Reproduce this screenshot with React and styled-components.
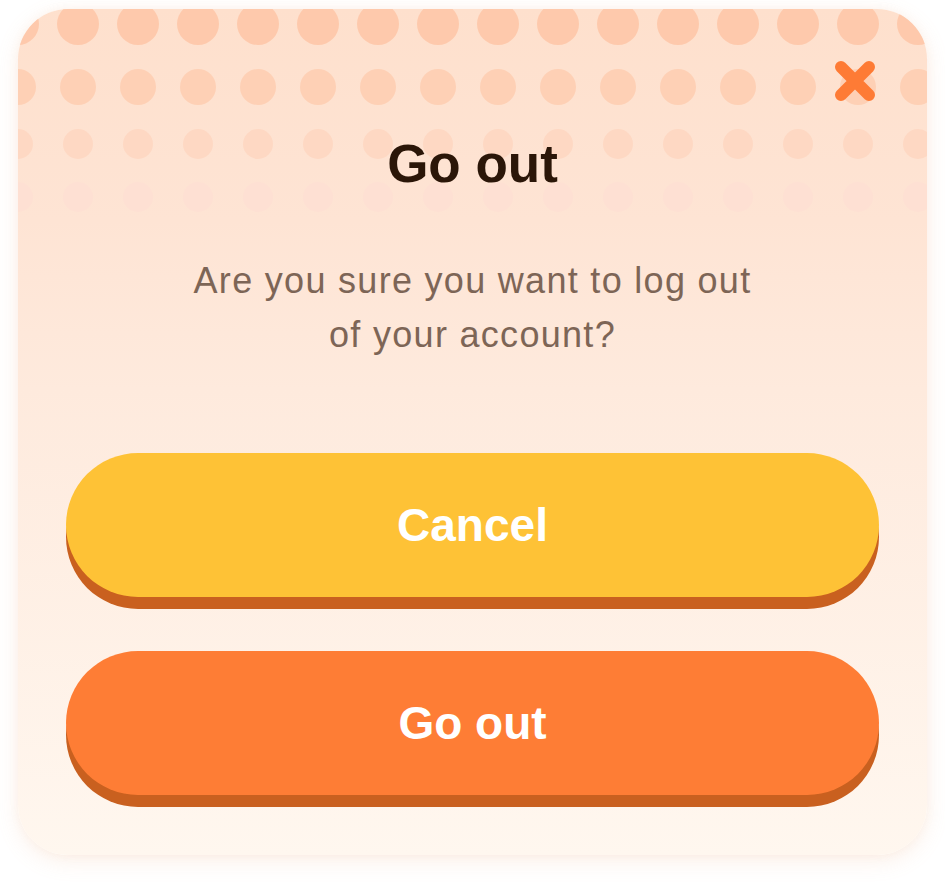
import styled, { createGlobalStyle } from "styled-components";

const GlobalStyle = createGlobalStyle`
  html, body {
    margin: 0;
    padding: 0;
    background: #ffffff;
  }
  body {
    font-family: "Liberation Sans", Arial, sans-serif;
  }
`;

const dotRows = [
  { y: 15, r: 21, fill: "#fec9ac" },
  { y: 78, r: 18, fill: "#fed0b5" },
  { y: 135, r: 15, fill: "#fed8c3" },
  { y: 188, r: 15, fill: "#fee0d3" },
];

function Dots() {
  const cols = Array.from({ length: 17 }, (_, i) => i * 60);
  return (
    <DotLayer width="909" height="230" viewBox="0 0 909 230">
      {dotRows.map((row) =>
        cols.map((x) => (
          <circle key={`${row.y}-${x}`} cx={x} cy={row.y} r={row.r} fill={row.fill} />
        ))
      )}
    </DotLayer>
  );
}

function CloseIcon() {
  return (
    <svg width="42" height="42" viewBox="0 0 42 42">
      <path
        d="M7 7 L35 35 M35 7 L7 35"
        stroke="#fe7b35"
        strokeWidth="12"
        strokeLinecap="round"
      />
    </svg>
  );
}

export default function App() {
  return (
    <Page>
      <GlobalStyle />
      <Card>
        <Dots />
        <CloseButton aria-label="close">
          <CloseIcon />
        </CloseButton>
        <Content>
          <Title>Go out</Title>
          <Message>
            Are you sure you want to log out
            <br />
            of your account?
          </Message>
          <Actions>
            <Button $bg="#fec236">Cancel</Button>
            <Button $bg="#fe7d35">Go out</Button>
          </Actions>
        </Content>
      </Card>
    </Page>
  );
}

const Page = styled.div`
  width: 945px;
  height: 882px;
  padding: 9px 18px 27px;
  box-sizing: border-box;
`;

const Card = styled.div`
  position: relative;
  width: 909px;
  height: 846px;
  border-radius: 50px;
  overflow: hidden;
  background: linear-gradient(180deg, #fee0cd 0%, #fee4d4 25%, #feeadd 45%, #fff7ef 100%);
  box-shadow: 0 6px 22px rgba(235, 160, 110, 0.16), 0 0 10px rgba(235, 160, 110, 0.08);
`;

const DotLayer = styled.svg`
  position: absolute;
  top: 0;
  left: 0;
  pointer-events: none;
`;

const CloseButton = styled.button`
  position: absolute;
  top: 51px;
  right: 51px;
  width: 42px;
  height: 42px;
  padding: 0;
  border: 0;
  background: none;
  cursor: pointer;
  display: flex;
  svg {
    display: block;
  }
`;

const Content = styled.div`
  position: relative;
  display: flex;
  flex-direction: column;
  align-items: center;
  padding: 125px 48px 0;
`;

const Title = styled.h1`
  margin: 0;
  font-size: 53px;
  line-height: 60px;
  font-weight: 700;
  color: #2b1608;
`;

const Message = styled.p`
  margin: 60px 0 0;
  font-size: 36px;
  line-height: 54px;
  letter-spacing: 1.3px;
  text-align: center;
  color: #7d6556;
`;

const Actions = styled.div`
  width: 100%;
  display: flex;
  flex-direction: column;
  gap: 54px;
  margin-top: 91px;
`;

const Button = styled.button`
  width: 100%;
  height: 144px;
  border: 0;
  border-radius: 72px;
  background: ${(p) => p.$bg};
  box-shadow: 0 12px 0 #c9601f;
  color: #ffffff;
  font-family: "Liberation Sans", Arial, sans-serif;
  font-size: 46px;
  font-weight: 700;
  cursor: pointer;
`;
